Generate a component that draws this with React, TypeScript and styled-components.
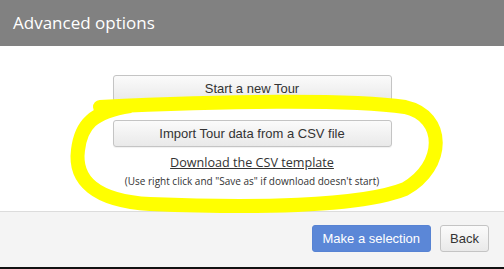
import React from "react";
import styled, { createGlobalStyle } from "styled-components";

const Global = createGlobalStyle`
  html, body { margin: 0; padding: 0; background: #fff; }
  body { width: 504px; height: 269px; overflow: hidden; }
`;

const Dialog = styled.div`
  position: relative;
  width: 504px;
  height: 269px;
  display: flex;
  flex-direction: column;
  background: #fff;
  border-bottom: 2px solid #111;
  box-sizing: border-box;
`;

const Header = styled.div`
  height: 46px;
  background: #818181;
  display: flex;
  align-items: center;
  padding: 0 13px;
  box-sizing: border-box;
`;

const Title = styled.h1`
  margin: 0;
  font-family: "Open Sans", sans-serif;
  font-weight: 400;
  font-size: 17px;
  color: #fff;
  padding-bottom: 1px;
`;

const Body = styled.div`
  flex: 1;
  display: flex;
  flex-direction: column;
  align-items: center;
  padding-top: 29px;
  box-sizing: border-box;
`;

const OptionButton = styled.button<{ $gap?: number }>`
  width: 279px;
  height: 27px;
  margin-bottom: ${(p) => p.$gap ?? 0}px;
  border: 1px solid #c4c4c4;
  border-radius: 3px;
  background: linear-gradient(#fbfbfb, #e9e9e9);
  font-family: "Liberation Sans", Arial, sans-serif;
  font-size: 13px;
  color: #333;
  box-shadow: 0 1px 1px rgba(0, 0, 0, 0.06);
  padding: 0;
`;

const Link = styled.a`
  margin-top: 8px;
  font-family: "Open Sans", sans-serif;
  font-size: 12.6px;
  color: #333;
  text-decoration: underline;
  line-height: 16px;
`;

const Hint = styled.div`
  margin-top: 4px;
  font-family: "Open Sans", sans-serif;
  font-size: 10px;
  color: #333;
  line-height: 13px;
`;

const Footer = styled.div`
  height: 56px;
  background: #f4f4f4;
  border-top: 1px solid #dcdcdc;
  display: flex;
  align-items: center;
  justify-content: flex-end;
  gap: 9px;
  padding: 0 15px 3px 0;
  box-sizing: border-box;
`;

const FooterButton = styled.button<{ $primary?: boolean }>`
  height: 27px;
  padding: 0 ${(p) => (p.$primary ? 10 : 9)}px;
  border-radius: 3px;
  font-family: "Liberation Sans", Arial, sans-serif;
  font-size: 13px;
  border: 1px solid ${(p) => (p.$primary ? "#5783d3" : "#c4c4c4")};
  background: ${(p) => (p.$primary ? "#5b87d7" : "linear-gradient(#fbfbfb, #e9e9e9)")};
  color: ${(p) => (p.$primary ? "#fff" : "#333")};
`;

const Highlight = styled.svg`
  position: absolute;
  left: 0;
  top: 0;
  pointer-events: none;
`;

export default function App() {
  return (
    <>
      <Global />
      <Dialog>
        <Header>
          <Title>Advanced options</Title>
        </Header>
        <Body>
          <OptionButton $gap={18}>Start a new Tour</OptionButton>
          <OptionButton>Import Tour data from a CSV file</OptionButton>
          <Link>Download the CSV template</Link>
          <Hint>(Use right click and "Save as" if download doesn't start)</Hint>
        </Body>
        <Footer>
          <FooterButton $primary>Make a selection</FooterButton>
          <FooterButton>Back</FooterButton>
        </Footer>
        <Highlight width="504" height="269" viewBox="0 0 504 269">
          <path
            d="M 100 107 C 220 101, 350 99, 405 107 C 446 116, 446 166, 405 189 C 360 207, 250 208, 150 204 C 95 201, 74 180, 78 150 C 81 125, 92 112, 130 106"
            fill="none"
            stroke="#ffff00"
            strokeWidth="14"
            strokeLinecap="round"
          />
        </Highlight>
      </Dialog>
    </>
  );
}
